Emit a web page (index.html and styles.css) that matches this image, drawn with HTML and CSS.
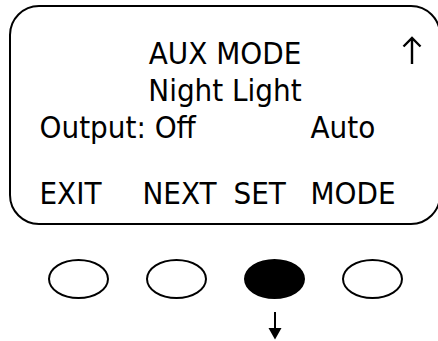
FILE: index.html
```html
<!DOCTYPE html>
<html lang="en">
  <head>
    <meta charset="UTF-8" />
    <meta name="viewport" content="width=device-width, initial-scale=1.0" />
    <title>AUX Mode</title>
    <link rel="stylesheet" href="styles.css">
  </head>
  <body>
    <div class="lcd">
      <div class="line center">
        AUX MODE
        <svg class="up-arrow" width="20" height="30" viewBox="0 0 20 30">
          <path d="M10 29 V3 M1.5 11.5 L10 3 L18.5 11.5" fill="none" stroke="#000" stroke-width="2.4" />
        </svg>
      </div>
      <div class="line center">Night Light</div>
      <div class="line cols">
        <span class="wide">Output: Off</span>
        <span>Auto</span>
      </div>
      <div class="line cols keys">
        <span>EXIT</span>
        <span>NEXT</span>
        <span>SET</span>
        <span>MODE</span>
      </div>
    </div>

    <div class="buttons">
      <div class="btn"></div>
      <div class="btn"></div>
      <div class="btn pressed">
        <svg class="down-arrow" width="14" height="28" viewBox="0 0 14 28">
          <path d="M7 0 V20" stroke="#000" stroke-width="2" />
          <path d="M0.5 16 L7 27.5 L13.5 16 Z" fill="#000" />
        </svg>
      </div>
      <div class="btn"></div>
    </div>
  </body>
</html>
```

FILE: styles.css
```css
body {
  margin: 0;
  width: 438px;
  height: 341px;
  overflow: hidden;
  background: #fff;
  font-family: "DejaVu Sans", sans-serif;
  font-stretch: condensed;
  font-size: 31px;
  color: #000;
}
.lcd {
  box-sizing: border-box;
  margin: 5px 0 0 9px;
  width: 432px;
  height: 220px;
  border: 2.5px solid #000;
  border-radius: 30px;
  padding: 28px 0 0 28.5px;
}
.line {
  height: 37px;
  line-height: 37px;
  white-space: nowrap;
}
.center {
  position: relative;
  text-align: center;
  padding-right: 28.5px;
}
.up-arrow {
  position: absolute;
  left: 362px;
  top: 0;
}
.cols {
  display: grid;
  grid-template-columns: 103px 91px 77px auto;
}
.wide {
  grid-column: 1 / 4;
}
.keys {
  margin-top: 29px;
}
.buttons {
  display: flex;
  gap: 37px;
  margin: 34px 0 0 48px;
}
.btn {
  position: relative;
  box-sizing: border-box;
  width: 61px;
  height: 40px;
  border: 2.5px solid #000;
  border-radius: 50%;
}
.pressed {
  background: #000;
}
.down-arrow {
  position: absolute;
  left: 22px;
  top: 51px;
}
```
